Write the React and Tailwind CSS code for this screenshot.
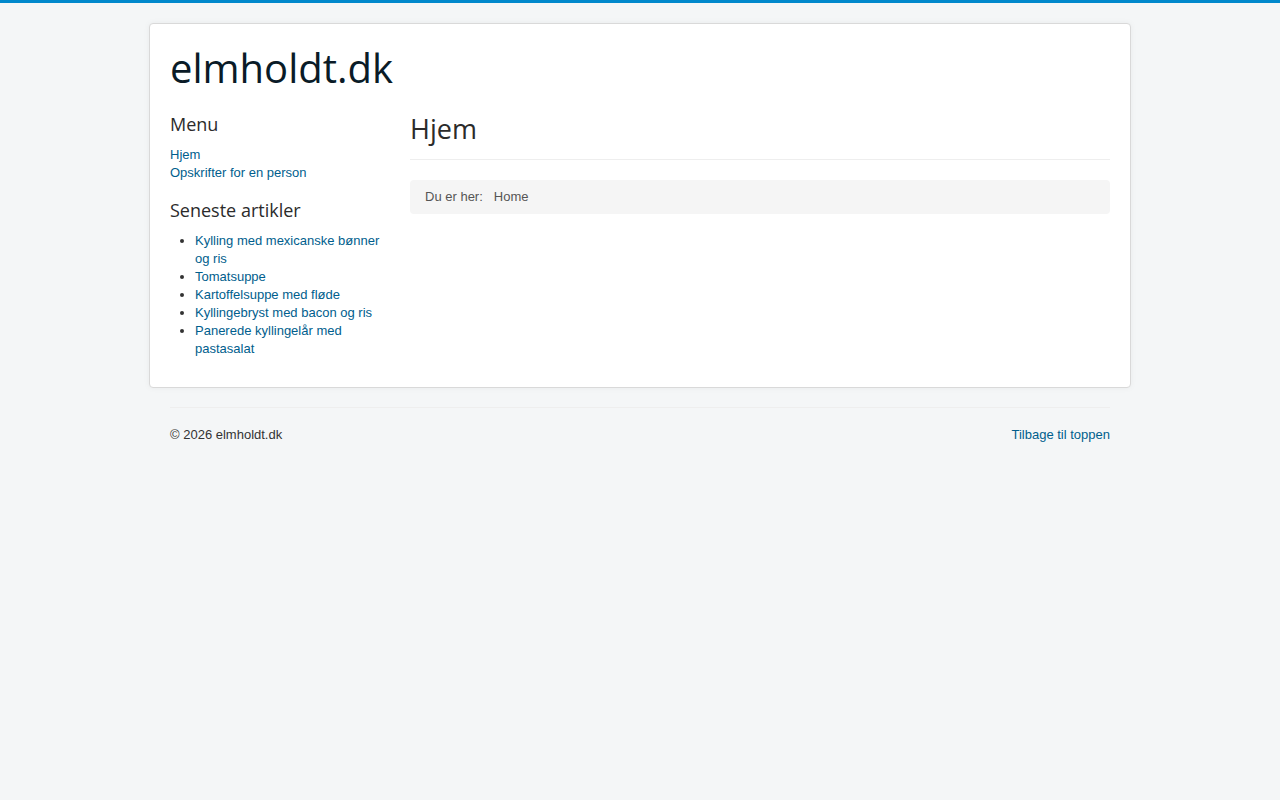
import React from "react";

const menu = ["Hjem", "Opskrifter for en person"];
const articles = [
  "Kylling med mexicanske bønner og ris",
  "Tomatsuppe",
  "Kartoffelsuppe med fløde",
  "Kyllingebryst med bacon og ris",
  "Panerede kyllingelår med pastasalat",
];

export default function App() {
  return (
    <div
      className="min-h-screen bg-[#f4f6f7] border-t-[3px] border-[#0088cc] pt-5 text-[13px] leading-[18px] text-[#333]"
      style={{ fontFamily: '"Liberation Sans", Arial, sans-serif' }}
    >
      {/* Body box */}
      <div className="mx-auto w-[982px] bg-white border border-[#d9d9d9] rounded p-5 shadow-[0_0_6px_rgba(0,0,0,0.05)]">
        <header>
          <a
            href="#"
            className="block text-[40px] leading-[48px] font-medium text-[#0a1b27] font-['Open_Sans',sans-serif]"
          >
            elmholdt.dk
          </a>
        </header>

        <div className="flex gap-5 mt-[19px]">
          {/* Sidebar */}
          <aside className="w-[220px] shrink-0">
            <h3 className="font-['Open_Sans',sans-serif] text-[18px] leading-[27px] font-medium text-[#2b2b2b]">
              Menu
            </h3>
            <ul className="mt-2">
              {menu.map((m) => (
                <li key={m}>
                  <a href="#" className="text-[#005e8d]">
                    {m}
                  </a>
                </li>
              ))}
            </ul>
            <h3 className="mt-[15px] font-['Open_Sans',sans-serif] text-[18px] leading-[27px] font-medium text-[#2b2b2b]">
              Seneste artikler
            </h3>
            <ul className="mt-2 mb-[9px] ml-[25px] list-disc">
              {articles.map((a) => (
                <li key={a}>
                  <a href="#" className="text-[#005e8d]">
                    {a}
                  </a>
                </li>
              ))}
            </ul>
          </aside>

          {/* Main */}
          <main className="flex-1">
            <div className="border-b border-[#eee] pb-3">
              <h1 className="font-['Open_Sans',sans-serif] text-[27px] leading-[36px] font-medium text-[#2b2b2b]">
                Hjem
              </h1>
            </div>
            <div className="mt-5 bg-[#f5f5f5] rounded px-[15px] py-2 text-[#555] flex">
              <span className="mr-[11px]">Du er her:</span>
              <span>Home</span>
            </div>
          </main>
        </div>
      </div>

      {/* Footer */}
      <footer className="mx-auto w-[940px]">
        <hr className="mt-[19px] border-0 border-t border-[#eee] border-b-white" />
        <div className="mt-[18px] flex justify-between">
          <p>© 2026 elmholdt.dk</p>
          <a href="#" className="text-[#005e8d]">
            Tilbage til toppen
          </a>
        </div>
      </footer>
    </div>
  );
}
